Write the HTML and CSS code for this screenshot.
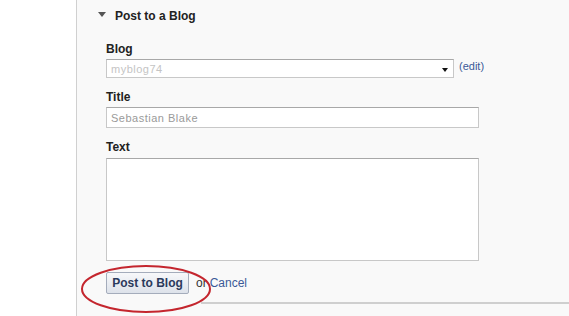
FILE: index.html
```html
<!DOCTYPE html>
<html>
<head>
<meta charset="utf-8">
<link rel="stylesheet" href="styles.css">
</head>
<body>
<div class="page">
  <div class="gutter"></div>
  <div class="panel">
    <div class="heading"><span class="tri"></span><span>Post to a Blog</span></div>
    <div class="form">
      <div class="label first">Blog</div>
      <div class="selrow">
        <div class="select"><span class="blur">myblog74</span><span class="arrow"></span></div>
        <a class="edit" href="#">(edit)</a>
      </div>
      <div class="label">Title</div>
      <div class="input"><span class="blur dark">Sebastian Blake</span></div>
      <div class="label">Text</div>
      <div class="textarea"></div>
      <div class="actions">
        <button class="btn">Post to Blog</button>
        <span class="or">or</span>
        <a class="cancel" href="#">Cancel</a>
      </div>
    </div>
    <div class="footer"></div>
    <svg class="ring" width="134" height="52" viewBox="0 0 134 52"><ellipse cx="67" cy="26" rx="64" ry="23" fill="none" stroke="#c4262e" stroke-width="2"/></svg>
  </div>
</div>
</body>
</html>
```
FILE: styles.css
```css
html, body { margin: 0; padding: 0; }
body { font-family: "Liberation Sans", Arial, sans-serif; background: #fff; color: #333; }
.page { display: flex; width: 569px; height: 316px; overflow: hidden; }
.gutter { width: 76px; border-right: 1px solid #d0d0d0; background: #fff; flex: none; }
.panel { flex: 1; background: #f9f9f9; position: relative; padding-top: 8px; }
.heading { display: flex; align-items: center; height: 16px; padding-left: 21px; font-weight: bold; font-size: 12px; color: #222; }
.tri { width: 0; height: 0; border-left: 4px solid transparent; border-right: 4px solid transparent; border-top: 5px solid #555; margin-right: 9px; margin-top: -3px; }
.form { margin-left: 29px; display: flex; flex-direction: column; }
.label { font-weight: bold; font-size: 12px; line-height: 15px; color: #222; margin-top: 12px; }
.label.first { margin-top: 18px; }
.selrow { display: flex; align-items: center; margin-top: 2px; }
.select { width: 342px; height: 17px; border: 1px solid #c8c8c8; border-top-color: #a8a8a8; background: #fff; display: flex; align-items: center; justify-content: space-between; padding-left: 4px; box-sizing: content-box; }
.arrow { width: 0; height: 0; border-left: 3px solid transparent; border-right: 3px solid transparent; border-top: 4px solid #111; margin-right: 5px; margin-top: 2px; }
.blur { font-size: 11px; color: #c4c4c4; letter-spacing: 0.5px; }
.blur.dark { color: #9a9a9a; }
.edit { font-size: 11px; color: #3b5998; text-decoration: none; margin-left: 5px; margin-top: -5px; }
.input { width: 367px; height: 19px; margin-top: 2px; border: 1px solid #c8c8c8; border-top-color: #a8a8a8; background: #fff; padding-left: 4px; display: flex; align-items: center; }
.textarea { width: 371px; height: 101px; margin-top: 3px; border: 1px solid #c8c8c8; border-top-color: #a8a8a8; background: #fff; }
.actions { display: flex; align-items: center; margin-top: 11px; font-size: 12px; }
.btn { font-family: "Liberation Sans", Arial, sans-serif; font-weight: bold; font-size: 12px; color: #2b3a5c; height: 22px; width: 83px; padding: 0; border: 1px solid #a4acbb; border-radius: 2px; background: linear-gradient(#f7f8fa, #dde2ea); }
.or { margin-left: 7px; color: #333; }
.cancel { margin-left: 3px; color: #3b5998; text-decoration: none; }
.footer { margin-top: 8px; margin-left: 124px; border-top: 2px solid #cfcfcf; }
.ring { position: absolute; left: 2px; top: 263px; }
```
